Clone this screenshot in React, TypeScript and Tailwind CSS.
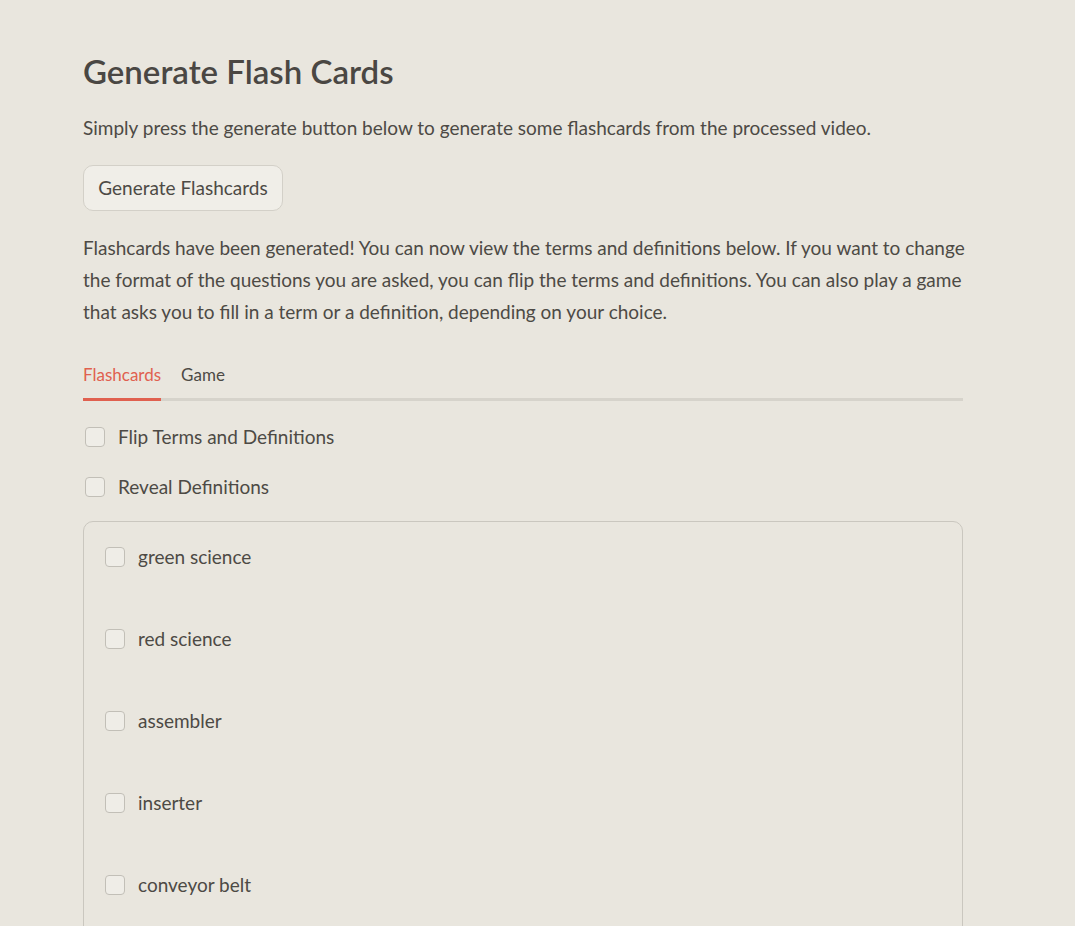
import React from "react";

const font = { fontFamily: "Lato, 'Noto Sans', sans-serif" };

function Box() {
  return (
    <span className="inline-block w-5 h-5 shrink-0 rounded-[4px] border border-[#c2bfb7] bg-[#efede7]" />
  );
}

function Check({ label }: { label: string }) {
  return (
    <div className="flex items-center h-[30px] pl-[2px]">
      <Box />
      <span className="ml-[13px] text-[19px] leading-[30px] text-[#4d4a45]">{label}</span>
    </div>
  );
}

export default function App() {
  const items = ["green science", "red science", "assembler", "inserter", "conveyor belt"];
  return (
    <div className="h-screen overflow-hidden bg-[#e9e6de] text-[#4d4a45]" style={font}>
      <div className="w-[880px] ml-[83px] pt-[50px]">
        <h1 className="text-[33px] leading-[42px] font-semibold text-[#4a4743]">Generate Flash Cards</h1>
        <p className="mt-[20px] text-[19px] leading-[32px]">
          Simply press the generate button below to generate some flashcards from the processed video.
        </p>
        <button className="mt-[21px] h-[46px] w-[200px] rounded-[10px] border border-[#d3d0c8] bg-[#f0eee8] text-[19px] text-[#4d4a45]">
          Generate Flashcards
        </button>
        <p className="mt-[21px] text-[19px] leading-[32px] whitespace-nowrap">
          Flashcards have been generated! You can now view the terms and definitions below. If you want to change
          <br />
          the format of the questions you are asked, you can flip the terms and definitions. You can also play a game
          <br />
          that asks you to fill in a term or a definition, depending on your choice.
        </p>
        <div className="mt-[27px] relative h-[46px] flex gap-5">
          <div className="absolute left-0 right-0 bottom-0 h-[3px] bg-[#d6d3cb]" />
          <div className="relative h-full flex items-start pt-[7px] text-[17px] text-[#e0604f]">
            Flashcards
            <div className="absolute left-0 right-0 bottom-0 h-[3px] bg-[#e0604f]" />
          </div>
          <div className="relative h-full flex items-start pt-[7px] text-[17px]">Game</div>
        </div>
        <div className="mt-[21px] flex flex-col gap-5">
          <Check label="Flip Terms and Definitions" />
          <Check label="Reveal Definitions" />
        </div>
        <div className="mt-[19px] rounded-[10px] border border-[#cac7bf] p-5 flex flex-col gap-[52px] pb-[80px]">
          {items.map((t) => (
            <div key={t} className="flex items-center h-[30px] pl-px">
              <Box />
              <span className="ml-[13px] text-[19px] leading-[30px]">{t}</span>
            </div>
          ))}
        </div>
      </div>
    </div>
  );
}
